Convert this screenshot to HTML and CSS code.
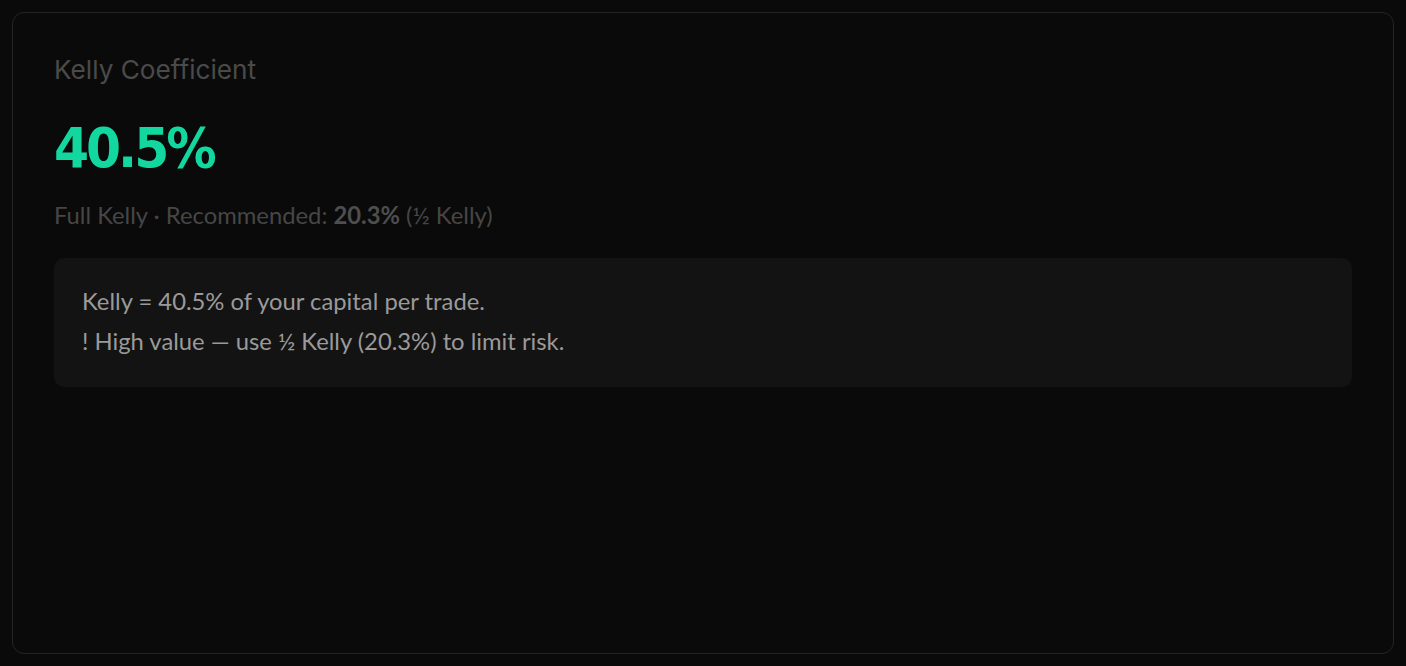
FILE: index.html
```html
<!DOCTYPE html>
<html lang="en">
<head>
<meta charset="utf-8">
<title>Kelly Coefficient</title>
<link rel="stylesheet" href="styles.css">
</head>
<body>
  <section class="card">
    <h2 class="card-title">Kelly Coefficient</h2>
    <div class="value">40.5%</div>
    <p class="sub">Full Kelly · Recommended: <strong>20.3%</strong> (½ Kelly)</p>
    <div class="note">
      <p>Kelly = 40.5% of your capital per trade.</p>
      <p>! High value — use ½ Kelly (20.3%) to limit risk.</p>
    </div>
  </section>
</body>
</html>
```
FILE: styles.css
```css
html, body {
  margin: 0;
  padding: 0;
  background: #0a0a0a;
}
body {
  padding: 12px;
  height: 666px;
  box-sizing: border-box;
  font-family: "Lato", "Inter", sans-serif;
}
.card {
  box-sizing: border-box;
  height: 642px;
  border: 1px solid #242424;
  border-radius: 12px;
  background: #0a0a0a;
  padding: 41px;
}
.card-title {
  margin: 0;
  font-family: "Inter", sans-serif;
  font-weight: 400;
  font-size: 26.2px;
  line-height: 32px;
  color: #4a4a4a;
}
.value {
  margin-top: 30px;
  font-family: "DejaVu Sans", sans-serif;
  font-stretch: condensed;
  font-weight: 700;
  font-size: 56px;
  line-height: 64px;
  color: #12d8a0;
  letter-spacing: -3px;
}
.sub {
  margin: 19px 0 0;
  font-size: 23.8px;
  line-height: 32px;
  color: #464646;
}
.sub strong {
  font-weight: 700;
  color: #4e4e4e;
}
.note {
  margin-top: 27px;
  background: #131313;
  border-radius: 10px;
  padding: 23px 28px 26px;
}
.note p {
  margin: 0;
  font-size: 23.8px;
  line-height: 40px;
  color: #9a9a9a;
}
```
